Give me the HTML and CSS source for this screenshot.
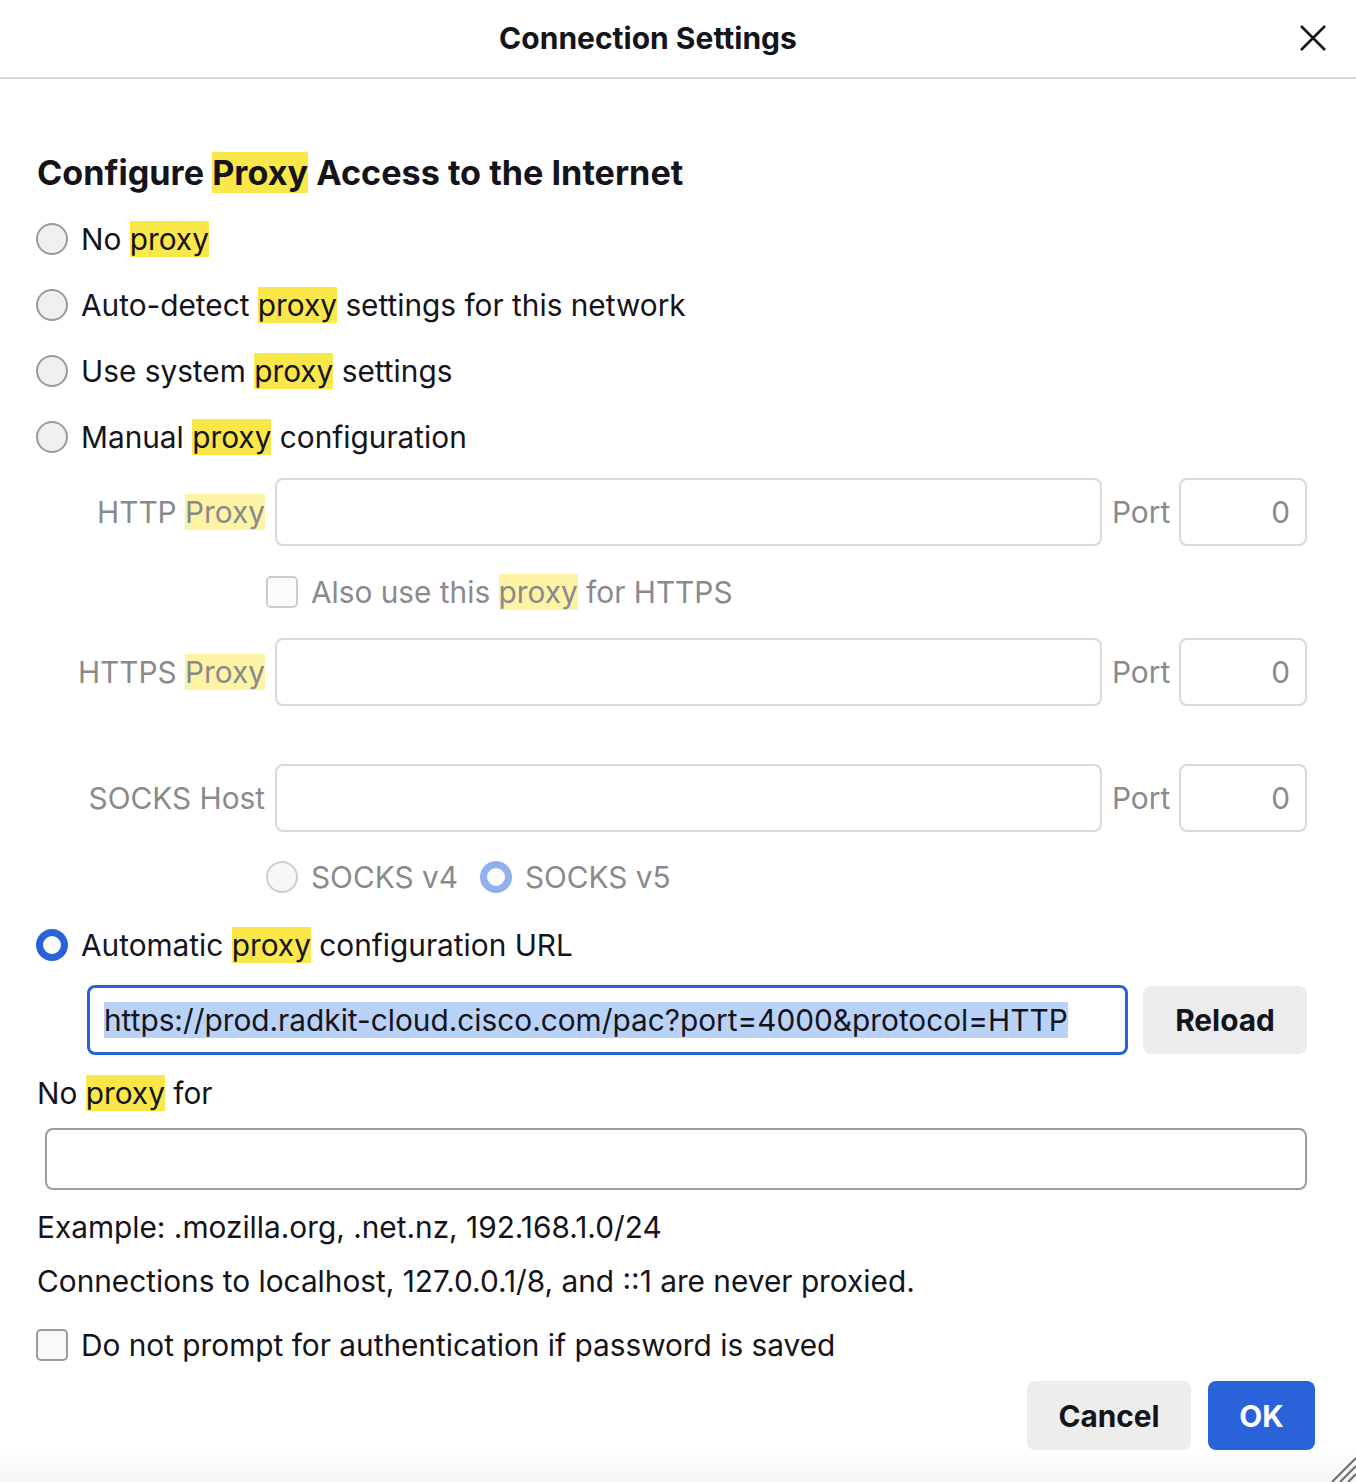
FILE: index.html
```html
<!DOCTYPE html>
<html lang="en">
<head>
<meta charset="utf-8">
<title>Connection Settings</title>
<link rel="stylesheet" href="styles.css">
</head>
<body>
<div class="dialog">
  <header class="titlebar">
    <span></span>
    <h2 class="title">Connection Settings</h2>
    <button class="close" aria-label="Close">
      <svg width="26" height="26" viewBox="0 0 26 26"><path d="M1 1 L25 25 M25 1 L1 25" stroke="#15141a" stroke-width="2.6" fill="none"/></svg>
    </button>
  </header>

  <main class="content">
    <h1 class="heading">Configure <mark class="hl">Proxy</mark> Access to the Internet</h1>

    <div class="radio-row"><span class="radio"></span><span>No <mark class="hl">proxy</mark></span></div>
    <div class="radio-row"><span class="radio"></span><span>Auto-detect <mark class="hl">proxy</mark> settings for this network</span></div>
    <div class="radio-row"><span class="radio"></span><span>Use system <mark class="hl">proxy</mark> settings</span></div>
    <div class="radio-row"><span class="radio"></span><span>Manual <mark class="hl">proxy</mark> configuration</span></div>

    <div class="manual">
      <div class="field-row first">
        <label class="flabel">HTTP <mark class="hl dim">Proxy</mark></label>
        <div class="input"></div>
        <label class="plabel">Port</label>
        <div class="input port">0</div>
      </div>
      <div class="check-row">
        <span class="checkbox dis"></span><span class="disabled">Also use this <mark class="hl dim">proxy</mark> for HTTPS</span>
      </div>
      <div class="field-row">
        <label class="flabel">HTTPS <mark class="hl dim">Proxy</mark></label>
        <div class="input"></div>
        <label class="plabel">Port</label>
        <div class="input port">0</div>
      </div>
      <div class="field-row socks">
        <label class="flabel">SOCKS Host</label>
        <div class="input"></div>
        <label class="plabel">Port</label>
        <div class="input port">0</div>
      </div>
      <div class="socks-row">
        <span class="radio dis"></span><span class="disabled">SOCKS v4</span>
        <span class="radio dis-on"></span><span class="disabled">SOCKS v5</span>
      </div>
    </div>

    <div class="radio-row auto"><span class="radio on"></span><span>Automatic <mark class="hl">proxy</mark> configuration URL</span></div>

    <div class="url-row">
      <div class="url-input"><span class="sel">https://prod.radkit-cloud.cisco.com/pac?port=4000&amp;protocol=HTTP</span></div>
      <button class="btn reload">Reload</button>
    </div>

    <div class="text-row noproxy"><span>No <mark class="hl">proxy</mark> for</span></div>
    <div class="textarea"></div>

    <div class="text-row example"><span>Example: .mozilla.org, .net.nz, 192.168.1.0/24</span></div>
    <div class="text-row"><span>Connections to localhost, 127.0.0.1/8, and ::1 are never proxied.</span></div>

    <div class="radio-row auth"><span class="checkbox"></span><span>Do not prompt for authentication if password is saved</span></div>
  </main>

  <footer class="footer">
    <button class="btn cancel">Cancel</button>
    <button class="btn ok">OK</button>
  </footer>

  <svg class="grip" width="28" height="28" viewBox="0 0 28 28"><path d="M28 4 L4 28 M28 12 L12 28 M28 20 L20 28" stroke="#707070" stroke-width="2.2" fill="none"/></svg>
</div>
</body>
</html>
```

FILE: styles.css
```css
* { box-sizing: border-box; }
html, body { margin: 0; padding: 0; }
body {
  background: #ffffff;
  font-family: Inter, "Noto Sans", "Liberation Sans", sans-serif;
  color: #15141a;
  font-size: 29.8px;
}
.dialog {
  position: relative;
  width: 1356px;
  height: 1482px;
  background: linear-gradient(to bottom, #ffffff 0, #ffffff 1450px, #f6f6f6 1482px);
  border-radius: 12px 12px 0 0;
  overflow: hidden;
}
.titlebar {
  display: grid;
  grid-template-columns: 1fr auto 1fr;
  align-items: center;
  height: 79px;
  border-bottom: 2px solid #d8d8dc;
  padding: 0 30px 2px 0;
}
.title {
  margin: 0 30px 0 0;
  font-size: 30px;
  font-weight: 700;
}
.close {
  justify-self: end;
  border: 0;
  background: none;
  padding: 0;
  width: 26px;
  height: 26px;
  display: flex;
}
.content {
  padding: 61px 49px 0 36px;
}
.heading {
  margin: 0 0 0 1px;
  height: 66px;
  line-height: 66px;
  font-size: 34.2px;
  font-weight: 700;
}
mark.hl {
  background: #fae84a;
  color: inherit;
}
mark.hl.dim {
  background: #fcf4a4;
}
.radio-row {
  display: flex;
  align-items: center;
  gap: 13px;
  height: 66px;
}
.radio {
  flex: none;
  width: 32px;
  height: 32px;
  border-radius: 50%;
  border: 2px solid #9a9a9e;
  background: #efeff1;
}
.radio.on {
  border: 7px solid #2a62d9;
  background: #fbfbfe;
}
.radio.dis {
  border-color: #cdcdcf;
  background: #f7f7f8;
}
.radio.dis-on {
  border: 7px solid #91b0ec;
  background: #fbfbfe;
}
.checkbox {
  flex: none;
  width: 32px;
  height: 32px;
  border-radius: 5px;
  border: 2px solid #9a9a9e;
  background: #f8f8f9;
}
.checkbox.dis {
  border-color: #cdcdcf;
  background: #fcfcfc;
}
.disabled, .flabel, .plabel {
  color: #8a8a8d;
}
.manual {
  display: flex;
  flex-direction: column;
}
.field-row {
  display: grid;
  grid-template-columns: 229px 1fr 57px 128px;
  column-gap: 10px;
  align-items: center;
  height: 68px;
}
.field-row.first { margin-top: 8px; }
.field-row.socks { margin-top: 58px; }
.flabel { text-align: right; white-space: nowrap; }
.plabel { text-align: left; }
.input {
  height: 68px;
  border: 2px solid #d9d9db;
  border-radius: 8px;
  background: #fff;
}
.input.port {
  display: flex;
  align-items: center;
  justify-content: flex-end;
  padding-right: 15px;
  color: #8a8a8d;
}
.check-row {
  display: flex;
  align-items: center;
  gap: 13px;
  height: 92px;
  padding-left: 230px;
}
.socks-row {
  display: flex;
  align-items: center;
  height: 66px;
  margin-top: 12px;
  padding-left: 230px;
}
.socks-row .radio { margin-right: 13px; }
.socks-row .disabled { margin-right: 22px; }
.radio-row.auto { margin-top: 2px; }
.url-row {
  display: flex;
  align-items: center;
  gap: 15px;
  margin-top: 7px;
  padding-left: 51px;
}
.url-input {
  flex: 1;
  height: 70px;
  border: 3px solid #2a62d9;
  border-radius: 8px;
  padding-left: 14px;
  display: flex;
  align-items: center;
  white-space: nowrap;
  overflow: hidden;
}
.sel {
  background: #b9d3f8;
}
.btn {
  font-family: inherit;
  font-size: 29.8px;
  font-weight: 700;
  border: 0;
  border-radius: 8px;
  color: #15141a;
  background: #ececee;
}
.reload {
  width: 164px;
  height: 68px;
}
.text-row {
  display: flex;
  align-items: center;
  height: 54px;
  padding-left: 1px;
}
.noproxy {
  height: 66px;
  margin-top: 5px;
}
.textarea {
  margin: 2px 0 0 9px;
  height: 62px;
  border: 2px solid #9d9d9f;
  border-radius: 8px;
}
.example { margin-top: 10px; }
.radio-row.auth { margin-top: 4px; }
.footer {
  display: flex;
  justify-content: flex-end;
  gap: 17px;
  padding: 3px 41px 0 0;
}
.cancel {
  width: 164px;
  height: 69px;
  background: #ededed;
}
.ok {
  width: 107px;
  height: 69px;
  background: #2a62d9;
  color: #ffffff;
}
.grip {
  position: absolute;
  right: 0;
  bottom: 0;
}
```
